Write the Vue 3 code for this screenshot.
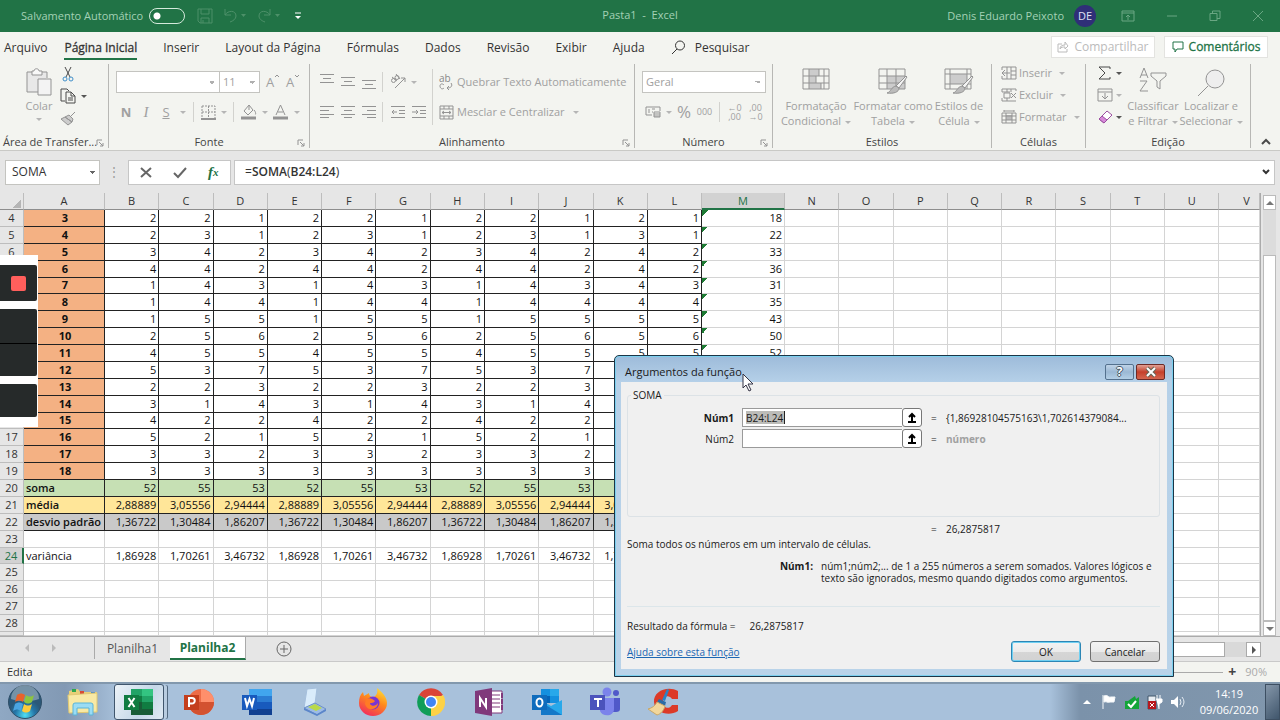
<script setup>
const menu = ['Arquivo', 'Página Inicial', 'Inserir', 'Layout da Página', 'Fórmulas', 'Dados', 'Revisão', 'Exibir', 'Ajuda']
const columns = 'ABCDEFGHIJKLMNOPQRSTUV'.split('')
const dataCols = 11
const scores = [
  [2, 2, 1], [2, 3, 1], [3, 4, 2], [4, 4, 2], [1, 4, 3], [1, 4, 4], [1, 5, 5], [2, 5, 6],
  [4, 5, 5], [5, 3, 7], [2, 2, 3], [3, 1, 4], [4, 2, 2], [5, 2, 1], [3, 3, 2], [3, 3, 3],
]
// Columns B–J repeat three values; K and L carry the last two of them.
const spread = (p) => Array.from({ length: dataCols }, (_, i) => (i < 9 ? p[i % 3] : p[i - 8]))
const rows = scores.map((p, i) => {
  const v = spread(p)
  return { n: i + 4, kind: 'score', label: i + 3, v, total: v.reduce((a, b) => a + b, 0) }
})
rows.push({ n: 20, kind: 'sum', label: 'soma', v: spread(['52', '55', '53']) })
rows.push({ n: 21, kind: 'mean', label: 'média', v: spread(['2,88889', '3,05556', '2,94444']) })
rows.push({ n: 22, kind: 'dev', label: 'desvio padrão', v: spread(['1,36722', '1,30484', '1,86207']) })
rows.push({ n: 23, kind: 'plain', label: '', v: spread(['', '', '']) })
rows.push({ n: 24, kind: 'plain', label: 'variância', v: spread(['1,86928', '1,70261', '3,46732']) })
for (let n = 25; n <= 28; n++) rows.push({ n, kind: 'plain', label: '', v: spread(['', '', '']) })
rows.push({ n: '', kind: 'plain', label: '', v: spread(['', '', '']) })
</script>

<template>
  <div class="screen">
    <header class="titlebar">
      <div class="start">
        <label class="autosave"><span>Salvamento Automático</span><input type="checkbox" class="toggle"></label>
        <div class="quick">
          <button aria-label="Salvar"><svg width="16" height="16" viewBox="0 0 16 16"><path d="M1 1h14v14H3l-2-2zM4 1v5h8V1M4 15v-5h8v5M6 15v-3" /></svg></button>
          <button aria-label="Desfazer"><svg width="24" height="16" viewBox="0 0 24 16"><path d="M2 1v6h6M2 7c3-5 11-5 11 1 0 3-3 5-6 6" /><path class="fill" d="M18 6h5l-2.500 3z" /></svg></button>
          <button aria-label="Refazer"><svg width="24" height="16" viewBox="0 0 24 16"><path d="M13 1v6H7M13 7C10 2 2 2 2 8c0 3 3 5 6 6" /><path class="fill" d="M18 6h5l-2.500 3z" /></svg></button>
          <button aria-label="Personalizar" class="bright"><svg width="8" height="8" viewBox="0 0 8 8"><path d="M1 1h6" /><path class="fill" d="M1 4h6L4 7z" /></svg></button>
        </div>
      </div>
      <div class="doc">Pasta1&nbsp; -&nbsp; Excel</div>
      <div class="end">
        <div class="account"><span>Denis Eduardo Peixoto</span><span class="avatar">DE</span></div>
        <div class="winbtns">
          <button aria-label="Opções da faixa"><svg width="14" height="12" viewBox="0 0 14 12"><path d="M1 1h12v10H1zM1 3h12M7 10V5M5 7l2-2 2 2" /></svg></button>
          <button aria-label="Minimizar"><svg width="12" height="12" viewBox="0 0 12 12"><path d="M1 6h10" /></svg></button>
          <button aria-label="Restaurar"><svg width="12" height="12" viewBox="0 0 12 12"><path d="M1 3.500h7v7H1zM3.500 3V1H11v7.500H8" /></svg></button>
          <button aria-label="Fechar"><svg width="12" height="12" viewBox="0 0 12 12"><path d="M1 1l10 10M11 1L1 11" /></svg></button>
        </div>
      </div>
    </header>

    <nav class="menubar">
      <button v-for="m in menu" :key="m" :class="{ current: m === 'Página Inicial' }">{{ m }}</button>
      <button class="search"><svg width="15" height="15" viewBox="0 0 15 15"><circle cx="9" cy="5.500" r="4.500" /><path d="M6 9l-5 5" /></svg>Pesquisar</button>
      <div class="right">
        <button class="share"><svg width="12" height="12" viewBox="0 0 12 12"><path d="M5 3H1v8h9V8M3 8c0-3 2-4 5-4V1l3 4-3 3V6C6 6 4 6 3 8z" /></svg>Compartilhar</button>
        <button class="comments"><svg width="12" height="12" viewBox="0 0 12 12"><path d="M1 1h10v7H5l-2 3V8H1z" /></svg>Comentários</button>
      </div>
    </nav>

    <section class="ribbon">
      <div class="group g-clip">
        <div class="content">
          <button class="big paste"><svg width="28" height="30" viewBox="0 0 28 30"><path d="M7 4H2v20h11M17 4h5v6" fill="#e8e8e8" /><path d="M3 5h18v6h-8v12H3z" fill="#e8e8e8" stroke="none" /><path d="M7 7V3h2c0-3 5-3 5 0h3v4z" fill="#f8f8f8" /><path d="M13 11h13v16H13z" fill="#f3f3f3" /></svg><span>Colar</span><i class="caret"></i></button>
          <div class="stack">
            <button aria-label="Recortar"><svg width="12" height="16" viewBox="0 0 12 16"><path class="dark" d="M3 1l5 10M9 1L4 11" /><circle class="blue" cx="3" cy="13" r="2" /><circle class="blue" cx="9" cy="13" r="2" /></svg></button>
            <button aria-label="Copiar"><svg width="16" height="16" viewBox="0 0 16 16"><path class="dark" d="M5 13H1V1h6l2 2M6 4h5l4 4v7H6zM11 4v4h4M8 10h5M8 12h5" /></svg><i class="caret strong"></i></button>
            <button aria-label="Pincel"><svg width="16" height="15" viewBox="0 0 16 15"><path d="M15 1l-4 4M5 6l4-2 4 4-1 3zM5 6l7 5-4 3-7-6z" fill="#ccc" /></svg></button>
          </div>
        </div>
        <div class="caption"><span>Área de Transfer...</span><svg class="launch" width="8" height="8" viewBox="0 0 8 8"><path d="M1 6V1h5M3 3l4 4M7 4v3H4" /></svg></div>
      </div>

      <div class="group g-font">
        <div class="content rows">
          <div class="line">
            <select class="box fontname" aria-label="Fonte"><option></option></select>
            <select class="box fontsize" aria-label="Tamanho"><option>11</option></select>
            <button class="w20 letter" aria-label="Aumentar fonte">A<svg class="mark" width="6" height="4" viewBox="0 0 6 4"><path d="M1 3l2-2 2 2" /></svg></button>
            <button class="w20 letter" aria-label="Diminuir fonte">A<svg class="mark" width="6" height="4" viewBox="0 0 6 4"><path d="M1 1l2 2 2-2" /></svg></button>
          </div>
          <div class="line">
            <button class="w20 letter"><b>N</b></button><button class="w20 letter serif"><i>I</i></button><button class="w20 letter"><u>S</u></button>
            <button class="w12" aria-label="Mais sublinhado"><i class="caret"></i></button><span class="vr tight"></span>
            <button class="w32" aria-label="Bordas"><svg width="15" height="15" viewBox="0 0 15 15"><path stroke-dasharray="2 1" d="M1 1h13v12M1 1v12M7.500 1v12M1 7h13" /><path d="M0 14h15" stroke-width="2" /></svg><i class="caret"></i></button><span class="vr tight"></span>
            <button class="w32" aria-label="Preenchimento"><svg width="16" height="16" viewBox="0 0 16 16"><path d="M8 1L3 7l4 4 5-5zM8 1v5M13 6c2 2 2 5 1 4" /><path d="M0 14h15" stroke-width="3" /></svg><i class="caret"></i></button>
            <button class="w32" aria-label="Cor da fonte"><svg width="16" height="16" viewBox="0 0 16 16"><path d="M3 11L7.500 1 12 11M5 8h5" /><path d="M0 14h15" stroke-width="3" /></svg><i class="caret"></i></button>
          </div>
        </div>
        <div class="caption"><span>Fonte</span><svg class="launch" width="8" height="8" viewBox="0 0 8 8"><path d="M1 6V1h5M3 3l4 4M7 4v3H4" /></svg></div>
      </div>

      <div class="group g-align">
        <div class="content cols">
          <div class="rows">
            <div class="line">
              <button class="w21" aria-label="Alinhar acima"><svg width="14" height="16" viewBox="0 0 14 16"><path d="M0 .500h14M3 4.500h8M0 8.500h14" /></svg></button>
              <button class="w21" aria-label="Alinhar ao meio"><svg width="14" height="16" viewBox="0 0 14 16"><path d="M0 3.500h14M3 7.500h8M0 11.500h14" /></svg></button>
              <button class="w21" aria-label="Alinhar abaixo"><svg width="14" height="16" viewBox="0 0 14 16"><path d="M0 6.500h14M3 10.500h8M0 14.500h14" /></svg></button>
              <span class="vr tight"></span>
              <button class="w32" aria-label="Orientação"><svg width="16" height="16" viewBox="0 0 16 16"><path d="M5 14L15 4M11 4h4v4" /><circle cx="3.500" cy="6.500" r="2" /><path d="M2 3l5 4" /><circle cx="7" cy="3.500" r="2" /><path d="M6 0l4 5" /></svg><i class="caret"></i></button>
            </div>
            <div class="line">
              <button class="w21" aria-label="Alinhar à esquerda"><svg width="14" height="14" viewBox="0 0 14 14"><path d="M0 1.500h14M0 5.500h9M0 9.500h14M0 12.500h9" /></svg></button>
              <button class="w21" aria-label="Centralizar"><svg width="14" height="14" viewBox="0 0 14 14"><path d="M0 1.500h14M3 5.500h8M0 9.500h14M3 12.500h8" /></svg></button>
              <button class="w21" aria-label="Alinhar à direita"><svg width="14" height="14" viewBox="0 0 14 14"><path d="M0 1.500h14M5 5.500h9M0 9.500h14M5 12.500h9" /></svg></button>
              <span class="vr tight"></span>
              <button class="w21" aria-label="Diminuir recuo"><svg width="14" height="14" viewBox="0 0 14 14"><path d="M0 1.500h14M8 5.500h6M8 8.500h6M0 12.500h14M6 7H1M3 5L1 7l2 2" /></svg></button>
              <button class="w21" aria-label="Aumentar recuo"><svg width="14" height="14" viewBox="0 0 14 14"><path d="M0 1.500h14M8 5.500h6M8 8.500h6M0 12.500h14M0 7h6M4 5l2 2-2 2" /></svg></button>
            </div>
          </div>
          <span class="vr tall"></span>
          <div class="rows">
            <div class="line"><button class="text"><span class="abc"><span>ab</span><svg width="14" height="8" viewBox="0 0 14 8"><path d="M5 2C3 0 1 1 1 3s2 4 4 2M12 0c2 3 0 5-4 5M10 3L8 5l2 2" /></svg></span>Quebrar Texto Automaticamente</button></div>
            <div class="line"><button class="text"><svg width="15" height="15" viewBox="0 0 15 15"><path d="M1 1h13v13H1zM1 4h13M1 11h13M5 1v3M10 1v3M5 11v3M10 11v3M3 7.500h9M5 6L3 7.500 5 9M10 6l2 1.500L10 9" /></svg>Mesclar e Centralizar<i class="caret"></i></button></div>
          </div>
        </div>
        <div class="caption"><span>Alinhamento</span><svg class="launch" width="8" height="8" viewBox="0 0 8 8"><path d="M1 6V1h5M3 3l4 4M7 4v3H4" /></svg></div>
      </div>

      <div class="group g-num">
        <div class="content rows">
          <div class="line"><select class="box format" aria-label="Formato"><option>Geral</option></select></div>
          <div class="line">
            <button class="w32" aria-label="Moeda"><svg width="16" height="14" viewBox="0 0 16 14"><path d="M1 2h14v4M1 2v8h6M4 4v4M7 4h3M7 7h1M9 7h6v5H9zM9 9h6M9 11h6" /></svg><i class="caret"></i></button>
            <button class="percent">%</button><button class="thousand">000</button><span class="vr"></span>
            <button class="w21 dec" aria-label="Aumentar casas">←0<br>,00</button><button class="w21 dec" aria-label="Diminuir casas">,00<br>→0</button>
          </div>
        </div>
        <div class="caption"><span>Número</span><svg class="launch" width="8" height="8" viewBox="0 0 8 8"><path d="M1 6V1h5M3 3l4 4M7 4v3H4" /></svg></div>
      </div>

      <div class="group g-style">
        <div class="content">
          <button class="big b1"><svg width="28" height="26" viewBox="0 0 28 26"><path fill="#ccc" stroke="none" d="M7 1h10v7H7zM7 8h7v7H7zM7 15h12v6H7z" /><path d="M1 1h26v20H1zM1 8h26M1 15h26M7 1v20M22 1v20M17 1v7M14 8v7M19 15v6" /></svg><span>Formatação<br>Condicional<i class="caret"></i></span></button>
          <button class="big b2"><svg width="30" height="26" viewBox="0 0 30 26"><path fill="#ccc" stroke="none" d="M9 8h18v13H9z" /><path d="M1 1h26v20H1zM1 8h26M1 15h26M9 1v20M18 1v20" /><path fill="#f3f3f3" d="M28 8L18 18l3 2 8-11z" /><path fill="#bbb" d="M18 18l3 2c0 4-5 6-12 5 4-1 4-6 9-7z" /></svg><span>Formatar como<br>Tabela<i class="caret"></i></span></button>
          <button class="big b3"><svg width="30" height="26" viewBox="0 0 30 26"><path fill="#ccc" stroke="none" d="M6 6h17v10H6z" /><path d="M1 1h26v20H1zM1 6h26M1 16h26M6 1v20M23 1v20" /><path fill="#f3f3f3" d="M28 8L18 18l3 2 8-11z" /><path fill="#bbb" d="M18 18l3 2c0 4-5 6-12 5 4-1 4-6 9-7z" /></svg><span>Estilos de<br>Célula<i class="caret"></i></span></button>
        </div>
        <div class="caption"><span>Estilos</span></div>
      </div>

      <div class="group g-cell">
        <div class="content stack3">
          <button><svg width="16" height="14" viewBox="0 0 16 14"><path d="M1 4V1h14v12H1v-3M6 1v12M10 1v12M10 5h5M10 9h5M9 7H1M4 4L1 7l3 3" /></svg>Inserir<i class="caret"></i></button>
          <button><svg width="16" height="14" viewBox="0 0 16 14"><path d="M1 1h14v2M1 1v3h8M1 13h14M1 10v3M6 1v3M10 1v3M6 10v3M3 5h6v5H3zM10 5l5 5M15 5l-5 5" /></svg>Excluir<i class="caret"></i></button>
          <button><svg width="16" height="14" viewBox="0 0 16 14"><path fill="#bbb" stroke="none" d="M5 5h6v5H5z" /><path d="M1 3h14v10H1zM5 3v10M11 3v10M1 6h14M1 10h14M3 1h10M3 0v2M13 0v2" /></svg>Formatar<i class="caret"></i></button>
        </div>
        <div class="caption"><span>Células</span></div>
      </div>

      <div class="group g-edit">
        <div class="content">
          <div class="stack3 narrow">
            <button aria-label="Soma"><svg width="16" height="14" viewBox="0 0 16 14"><path class="dark" d="M13 3V1H2l6 6-6 6h11v-2" /></svg><i class="caret strong"></i></button>
            <button aria-label="Preencher"><svg width="16" height="14" viewBox="0 0 16 14"><path d="M1 1h14v12H1zM1 4h14M8 5v6M5 8l3 3 3-3" /></svg><i class="caret"></i></button>
            <button aria-label="Limpar"><svg width="16" height="14" viewBox="0 0 16 14"><path class="purple" fill="#fff" d="M10 1l5 4-8 8-5-4z" /><path class="purple" fill="#d78ad9" d="M5 6l5 4-3 3-5-4z" /></svg><i class="caret strong"></i></button>
          </div>
          <button class="big b4"><svg width="28" height="26" viewBox="0 0 28 26"><path d="M1 10L5 0l4 10M2 7h6M1 13h7L1 23h8M12 5h15v3l-6 5v8l-3-2v-6l-6-5z" /></svg><span>Classificar<br>e Filtrar<i class="caret"></i></span></button>
          <button class="big b5"><svg width="28" height="28" viewBox="0 0 28 28"><circle cx="18" cy="10" r="9" fill="#eee" /><path d="M11 17L1 27" /></svg><span>Localizar e<br>Selecionar<i class="caret"></i></span></button>
        </div>
        <div class="caption"><span>Edição</span></div>
      </div>
      <button class="collapse" aria-label="Recolher"><svg width="10" height="8" viewBox="0 0 10 8"><path class="dark" d="M1 6l4-4 4 4" stroke-width="2" /></svg></button>
    </section>

    <section class="formula">
      <select class="namebox" aria-label="Caixa de nome"><option>SOMA</option></select>
      <span class="dots">⋮</span>
      <div class="fxbtns">
        <button aria-label="Cancelar edição"><svg width="12" height="12" viewBox="0 0 12 12"><path d="M1 2l10 9M11 2L1 11" stroke-width="2" /></svg></button>
        <button aria-label="Inserir valor"><svg width="14" height="12" viewBox="0 0 14 12"><path d="M1 7l4 4 8-9" stroke-width="2" /></svg></button>
        <button class="fx" aria-label="Inserir função">f<small>x</small></button>
      </div>
      <div class="fbar"><span>=<b>SOMA</b>(<b>B24:L24</b>)</span><svg width="10" height="8" viewBox="0 0 10 8"><path d="M2 2l3 3 3-3" stroke-width="2" /></svg></div>
    </section>

    <main class="sheet">
      <table>
        <thead><tr>
          <th class="corner"></th>
          <th v-for="c in columns" :key="c" :class="{ active: c === 'M', last: c === 'V' }">{{ c }}</th>
        </tr></thead>
        <tbody>
          <tr v-for="(r, i) in rows" :key="i" :class="r.kind">
            <th :class="{ on: r.n === 24 }">{{ r.n }}</th>
            <td class="lab">{{ r.label }}</td>
            <td v-for="(x, j) in r.v" :key="j" class="num">{{ x }}</td>
            <td class="tot" :class="{ flag: r.total }">{{ r.total }}</td>
            <td v-for="k in 9" :key="'e' + k"></td>
          </tr>
        </tbody>
      </table>
      <div class="vscroll"><span class="btn"><i class="up"></i></span><span class="track"></span><span class="thumb"></span><span class="btn"><i class="down"></i></span></div>
    </main>

    <section class="tabs">
      <span class="arrows"><i class="left"></i><i class="rightarrow"></i></span>
      <button class="tab">Planilha1</button><button class="tab sel">Planilha2</button>
      <button class="plus" aria-label="Nova planilha"><svg width="16" height="16" viewBox="0 0 16 16"><circle cx="8" cy="8" r="7" /><path d="M8 4v8M4 8h8" /></svg></button>
      <div class="hscroll"><span class="hthumb"></span><span class="htrack"></span><span class="hbtn"><i class="rightarrow"></i></span></div>
    </section>
    <footer class="status"><span>Edita</span><span class="zoom"><i class="rail"></i><b>+</b><span>90%</span></span></footer>

    <footer class="taskbar">
      <button class="task" aria-label="Iniciar"><svg width="36" height="36" viewBox="0 0 36 36"><defs><radialGradient id="orb" cy=".9"><stop offset="0" stop-color="#4fe0f5" /><stop offset=".6" stop-color="#2476a8" /><stop offset="1" stop-color="#2b5878" /></radialGradient></defs><circle cx="18" cy="18" r="16.500" fill="url(#orb)" stroke="#2f4f68" /><path d="M4 15a14 14 0 0 1 28 0c-8 3-20 3-28 0z" fill="#fff" opacity=".35" /><path d="M10 11c3-2 5-2 8 0l-2 7c-3-2-5-2-8 0z" fill="#e9622a" /><path d="M19 11c3 2 5 2 8 0l-2 7c-3 2-5 2-8 0z" fill="#8cc540" /><path d="M8 20c3-2 5-2 8 0l-2 7c-3-2-5-2-8 0z" fill="#4aa5e2" /><path d="M17 20c3 2 5 2 8 0l-2 7c-3 2-5 2-8 0z" fill="#fccb3d" /></svg></button>
      <button class="task" aria-label="Explorador"><svg width="32" height="30" viewBox="0 0 32 30"><path d="M2 4l9-2 2 3h17v20H2z" fill="#e8cf78" /><path d="M5 2h4v3H5z" fill="#2fa84f" /><path d="M13 4h4v3h-4z" fill="#d74a35" /><path d="M24 5h4v3h-4z" fill="#4a8ad0" /><path d="M1 8l29-2v19l-28 1z" fill="#f8e9a5" stroke="#e0c873" /><path d="M6 28V18q0-2 2-2h16q2 0 2 2v10h-4v-7H10v7z" fill="#9bdcf4" stroke="#5ab4d8" /></svg></button>
      <button class="task open" aria-label="Excel"><svg width="30" height="28" viewBox="0 0 30 28"><path d="M7 1h22v26H7z" fill="#21a366" /><path d="M18 1h11v7H18z" fill="#33c481" /><path d="M7 8h11v6H7z" fill="#107c41" /><path d="M7 14h11v13H7z" fill="#185c37" /><path d="M18 14h11v7H18z" fill="#107c41" /><path d="M18 21h11v6H18z" fill="#185c37" /><path d="M0 7h15v15H0z" fill="#107c41" /><path d="M4.500 10l6 9M10.500 10l-6 9" stroke="#fff" stroke-width="2" /></svg></button>
      <button class="task" aria-label="PowerPoint"><svg width="30" height="28" viewBox="0 0 30 28"><circle cx="17" cy="14" r="13" fill="#ed6c47" /><path d="M17 1a13 13 0 0 1 13 13H17z" fill="#ff8f6b" /><path d="M4 14h26a13 13 0 0 1-26 0z" fill="#d35230" /><path d="M0 7h15v15H0z" fill="#c43e1c" /><path d="M5 19v-9h3a2.500 2.500 0 0 1 0 5.500H5" fill="none" stroke="#fff" stroke-width="2" /></svg></button>
      <button class="task" aria-label="Word"><svg width="30" height="28" viewBox="0 0 30 28"><path d="M7 1h23v26H7z" fill="#2b7cd3" /><path d="M7 1h23v7H7z" fill="#41a5ee" /><path d="M7 14h23v7H7z" fill="#185abd" /><path d="M7 21h23v6H7z" fill="#103f91" /><path d="M0 7h15v15H0z" fill="#185abd" /><path d="M3 10l2 8 2.500-7L10 18l2-8" fill="none" stroke="#fff" stroke-width="2" /></svg></button>
      <button class="task" aria-label="Scanner"><svg width="28" height="30" viewBox="0 0 28 30"><path d="M6 2l10-1-2 16-11 4z" fill="#d9ecfb" stroke="#a5bfdc" /><path d="M3 21l11-5 11 6-9 6z" fill="#9dbbe6" stroke="#6f92c8" /><path d="M7 20l7-3 7 4-6 3z" fill="#b9d94a" /><path d="M3 21v2l13 6 9-5v-2l-9 5z" fill="#5b86ca" /></svg></button>
      <button class="task" aria-label="Firefox"><svg width="30" height="30" viewBox="0 0 30 30"><defs><linearGradient id="fire" x1=".8" y1="0" x2=".3" y2="1"><stop offset="0" stop-color="#ffe13a" /><stop offset=".45" stop-color="#ff8a1c" /><stop offset="1" stop-color="#f22c5d" /></linearGradient></defs><path d="M19 1c5 4 10 9 10 15a14 13 0 0 1-28 0c0-5 1-8 4-11l1 4 5-3c0 3 2 4 5 4 3-2 4-5 3-9z" fill="url(#fire)" /><circle cx="15" cy="16" r="6.500" fill="#7a35d2" /><path d="M8 12c4-2 7 0 9 2-2 3-5 1-5 3 2 3 6 2 8-1 0 7-11 9-13 1z" fill="#ff7b25" /></svg></button>
      <button class="task" aria-label="Chrome"><svg width="28" height="28" viewBox="0 0 28 28"><path d="M14 14L2 7a14 14 0 0 1 24 0z" fill="#db4437" /><path d="M14 14l12-7a14 14 0 0 1-12 21z" fill="#fdd247" /><path d="M14 14v14A14 14 0 0 1 2 7z" fill="#0f9d58" /><path d="M14 8h12.700a14 14 0 0 1-11.700 20l5-10z" fill="#fdd247" /><circle cx="14" cy="14" r="6.500" fill="#fff" /><circle cx="14" cy="14" r="5" fill="#4285f4" /></svg></button>
      <button class="task" aria-label="OneNote"><svg width="30" height="30" viewBox="0 0 30 30"><path d="M15 4h13v22H15z" fill="#fff" stroke="#80397b" /><path d="M18 8h8M18 12h8M18 16h8M18 20h8" stroke="#80397b" /><path d="M28 6v5M28 12v5M28 18v5" stroke="#80397b" stroke-width="2" /><path d="M1 4l17-3v28L1 26z" fill="#80397b" /><path d="M6 20v-9l6 9v-9" fill="none" stroke="#fff" stroke-width="2" /></svg></button>
      <button class="task" aria-label="Outlook"><svg width="30" height="28" viewBox="0 0 30 28"><path d="M9 1h18v14H9z" fill="#1490df" /><path d="M18 1h9v7h-9z" fill="#28a8ea" /><path d="M9 8h9v7H9z" fill="#0364b8" /><path d="M9 12l10 6 11-6v15H9z" fill="#28a8ea" /><path d="M9 14l21 13H9z" fill="#1478c8" /><path d="M0 7h15v15H0z" fill="#0f6cbd" /><ellipse cx="7.500" cy="14.500" rx="3" ry="4" fill="none" stroke="#fff" stroke-width="2" /></svg></button>
      <button class="task" aria-label="Teams"><svg width="30" height="30" viewBox="0 0 30 30"><circle cx="17" cy="5" r="4.500" fill="#7b83eb" /><circle cx="26" cy="6" r="3" fill="#5059c9" /><path d="M21 11h9v11q0 3-4 3h-5z" fill="#5059c9" /><path d="M10 11h14v11c0 8-12 8-14 2z" fill="#7b83eb" /><path d="M0 8h15v15H0z" fill="#4b53bc" /><path d="M4 12h8M8 12v8" stroke="#fff" stroke-width="2" /></svg></button>
      <button class="task" aria-label="CCleaner"><svg width="32" height="30" viewBox="0 0 32 30"><path d="M31 4v8h-6c-3-5-9-3-9 3s6 8 9 3h6v6c-9 6-23 2-24-9S21-2 31 4z" fill="#dc3a28" /><path d="M20 2l2 1-4 11-3-1z" fill="#2b83c6" /><path d="M12 12l7 3-1 4-8-4z" fill="#2b6ba5" /><path d="M10 15l8 4c-1 4-4 8-8 9L1 22c4-1 7-3 9-7z" fill="#f2d79c" stroke="#c9a768" /></svg></button>
      <div class="tray">
        <i class="up"></i>
        <svg width="16" height="18" viewBox="0 0 16 18"><path d="M2 2v14M3 3c4-2 4 2 7 1h4l-1 5H9c-3 1-3-1-6 0z" fill="#fff" stroke="#f5f8fa" /></svg>
        <svg width="16" height="16" viewBox="0 0 16 16"><path d="M1 7h3l7-5 1 3 3-2v12H1z" fill="#14a53a" /><path d="M4 10l3 3 5-6" fill="none" stroke="#fff" stroke-width="2" /></svg>
        <svg width="16" height="16" viewBox="0 0 16 16"><path d="M1 2h8v13H1z" fill="#e8edf2" stroke="#40566b" /><path d="M1 7h8v8H1z" fill="#b8181e" /><path d="M3 9l4 4M7 9l-4 4" stroke="#fff" /><path d="M10 1v4M13 1v4M9 5h6v3l-3 2v5" fill="#fff" stroke="#fff" stroke-width="1" /></svg>
        <svg width="16" height="16" viewBox="0 0 16 16"><path d="M1 6h3l4-4v12l-4-4H1z" fill="#fff" /><path d="M10 5q2 3 0 6M12 3q4 5 0 10" fill="none" stroke="#e5ecf3" /></svg>
      </div>
      <div class="clock">14:19<br>09/06/2020</div>
      <span class="desk"></span>
    </footer>

    <div class="recorder"><span class="rec"><i></i></span><span class="double"></span><span class="one"></span></div>

    <div class="dialog" role="dialog" aria-label="Argumentos da função">
      <div class="dtitle"><span>Argumentos da função</span>
        <button aria-label="Ajuda da janela">?</button><button class="x" aria-label="Fechar janela"><svg width="12" height="10" viewBox="0 0 12 10"><path d="M2 1l8 8M10 1L2 9" stroke="#665" stroke-width="4" /><path d="M2 1l8 8M10 1L2 9" stroke="#fff" stroke-width="2" /></svg></button>
      </div>
      <div class="dbody">
        <fieldset>
          <legend>SOMA</legend>
          <div class="arg"><label for="n1"><b>Núm1</b></label><span class="field"><span class="marked"><input id="n1" value="B24:L24"></span><button aria-label="Selecionar Núm1"><svg width="10" height="10" viewBox="0 0 10 10"><path d="M5 8V2M2 4l3-3 3 3M1 9h8" /></svg></button></span><span>=</span><span>{1,86928104575163\1,702614379084...</span></div>
          <div class="arg"><label for="n2">Núm2</label><span class="field"><span class="marked"><input id="n2" class="empty"></span><button aria-label="Selecionar Núm2"><svg width="10" height="10" viewBox="0 0 10 10"><path d="M5 8V2M2 4l3-3 3 3M1 9h8" /></svg></button></span><span>=</span><b class="gray">número</b></div>
        </fieldset>
        <div class="arg result"><span></span><span></span><span>=</span><span>26,2875817</span></div>
        <p class="desc">Soma todos os números em um intervalo de células.</p>
        <div class="help"><b>Núm1:</b><span>núm1;núm2;... de 1 a 255 números a serem somados. Valores lógicos e<br>texto são ignorados, mesmo quando digitados como argumentos.</span></div>
        <div class="final"><span>Resultado da fórmula =</span><span>26,2875817</span></div>
        <div class="foot"><a href="#">Ajuda sobre esta função</a><button class="ok">OK</button><button>Cancelar</button></div>
      </div>
    </div>
    <svg class="pointer" width="13" height="19" viewBox="0 0 13 19"><path d="M1 1v14l3-3 3 6 2-1-3-6h5z" fill="#fff" stroke="#334" /></svg>
  </div>
</template>

<style>
body { margin: 0; }
</style>

<style scoped>
.screen { position: relative; display: flex; flex-direction: column; height: 100vh; min-height: 560px; overflow: hidden; background: #e6e6e6; color: #333; font: 11px/14px "Open Sans", "Noto Sans", sans-serif; }
.screen * { box-sizing: border-box; }
button, input, select { font: inherit; color: inherit; }
button { padding: 0; border: 0; background: none; }
svg { flex: none; display: block; overflow: visible; }
select { appearance: none; }

.titlebar { display: grid; grid-template-columns: 1fr auto 1fr; align-items: center; height: 32px; flex: none; background: #217346; color: #a3d1b5; }
.titlebar svg, .menubar svg, .ribbon svg, .formula svg, .plus svg { fill: none; stroke: currentColor; }
.titlebar .fill { fill: currentColor; stroke: none; }
.start, .end { display: flex; align-items: center; }
.end { justify-content: flex-end; }
.autosave { display: flex; align-items: center; gap: 6px; width: 194px; padding-left: 21px; white-space: nowrap; }
.toggle { appearance: none; flex: none; width: 36px; height: 16px; margin: 0; border: 1px solid #d5eadc; border-radius: 8px; background: radial-gradient(circle at 7px 7px, #fff 3px, transparent 4px); }
.quick { display: flex; align-items: center; gap: 10px; padding-left: 3px; color: #4d9069; }
.quick .bright { color: #fff; margin-left: 3px; }
.doc { padding-bottom: 2px; }
.account { display: flex; align-items: center; gap: 10px; padding-right: 25px; }
.avatar { width: 22px; height: 22px; border-radius: 50%; background: #2f2f78; color: #dfe0f5; text-align: center; line-height: 22px; }
.winbtns { display: flex; gap: 31px; padding-right: 16px; color: #6aa783; }

.menubar { display: flex; align-items: center; gap: 26px; height: 30px; flex: none; padding-left: 4px; background: #f3f4f0; font-size: 12px; white-space: nowrap; }
.menubar > button { height: 25px; padding-top: 3px; border-bottom: 2px solid transparent; }
.menubar > button:first-child { margin-right: -9px; }
.menubar .current { border-color: #217346; -webkit-text-stroke: .3px; }
.search { display: flex; align-items: center; gap: 9px; }
.right { display: flex; gap: 9px; margin-left: auto; padding-right: 12px; }
.right button { display: flex; align-items: center; justify-content: center; gap: 5px; width: 104px; height: 22px; background: #fff; border: 1px solid #e3e3e0; }
.right .share { color: #bbb; }
.right .comments { color: #217346; -webkit-text-stroke: .3px; }

.ribbon { display: flex; height: 89px; flex: none; background: #f3f4f0; border-bottom: 1px solid #c9c9c6; color: #a0a0a0; font-size: 11px; }
.ribbon svg { stroke: #939393; }
.group { position: relative; flex: none; display: flex; flex-direction: column; height: 84px; margin-top: 2px; border-right: 1px solid #b7b7b4; }
.g-clip { width: 109px; }
.g-font { width: 201px; }
.g-align { width: 325px; }
.g-num { width: 138px; }
.g-style { width: 219px; }
.g-cell { width: 94px; }
.g-edit { width: 165px; }
.content { display: flex; height: 70px; white-space: nowrap; }
.rows { display: flex; flex-direction: column; padding-top: 3px; }
.line { display: flex; align-items: center; height: 30px; }
.line button { display: flex; align-items: center; justify-content: center; height: 24px; }
.caption { position: relative; display: flex; justify-content: center; height: 14px; line-height: 15px; color: #444; white-space: nowrap; }
.g-clip .caption { justify-content: flex-start; padding-left: 3px; }
.launch { position: absolute; right: 4px; top: 5px; }
.caret { display: inline-block; flex: none; width: 0; height: 0; border: 3px solid transparent; border-top-color: #b5b5b5; border-bottom: 0; margin-left: 5px; vertical-align: middle; }
.caret.strong { border-top-color: #555; }
.dark { stroke: #4a4a4a; }
.blue { stroke: #3f8fca; }
.purple { stroke: #9b4ea0; }
.big { display: flex; flex-direction: column; align-items: center; line-height: 15px; padding-top: 4px; }
.big > svg { height: 30px; }
.g-style .big > svg, .b4 > svg { height: 26px; margin-bottom: 4px; }
.big .caret { margin-left: 4px; }
.paste { width: 54px; margin-left: 12px; }
.paste .caret { margin: 5px 0 0; }
.stack { width: 34px; display: flex; flex-direction: column; gap: 6px; padding-top: 2px; margin-left: -6px; }
.stack button { display: flex; align-items: center; justify-content: flex-start; height: 16px; }
.stack button:first-child { padding-left: 2px; }
.g-font .rows { padding-left: 7px; }
.box, .namebox {
  --arrow: #b0b0b0;
  border: 1px solid #c4c4c0;
  border-radius: 0;
  padding: 0 3px;
  background:
    linear-gradient(to bottom right, var(--arrow) 50%, transparent 50%) no-repeat right 4px center / 3px 3px,
    linear-gradient(to bottom left, var(--arrow) 50%, transparent 50%) no-repeat right 7px center / 3px 3px,
    #fff;
}
.box { height: 22px; }
.fontname { width: 104px; }
.fontsize { width: 41px; margin: 0 3px 0 -1px; }
.format { width: 124px; }
.w12 { width: 14px; }
.w12 .caret { margin: 0; }
.w20 { width: 20px; }
.w21 { width: 21px; }
.w32 { width: 32px; }
.letter { font-size: 13px; }
.letter .mark { align-self: flex-start; margin-top: 4px; }
.serif { font-family: "Liberation Serif", serif; font-size: 15px; }
.vr { width: 1px; height: 20px; margin: 0 4px; background: #d2d2ce; flex: none; }
.vr.tight { margin: 0 4px 0 3px; }
.vr.tall { height: 56px; margin: 5px 6px 0 0; }
.g-align .cols > .rows:first-child { width: 122px; padding-left: 6px; }
.text { gap: 3px; }
.abc { display: flex; flex-direction: column; width: 15px; font-size: 10px; line-height: 9px; color: #888; text-align: left; }
.g-num .rows { padding-left: 7px; }
.percent { font-size: 17px; width: 20px; }
.thousand { font-size: 9px; width: 21px; }
.dec { font-size: 9px; line-height: 9px; }
.b1 { width: 76px; margin-left: 5px; }
.b2 { width: 78px; }
.b3 { width: 54px; }
.stack3 { display: flex; flex-direction: column; }
.g-cell .stack3 { padding-left: 9px; }
.stack3 button { display: flex; align-items: center; gap: 2px; height: 22px; padding-bottom: 4px; }
.narrow { width: 38px; padding-left: 11px; }
.narrow .caret { margin-left: 1px; }
.b4 { width: 58px; }
.b5 { width: 58px; }
.collapse { align-self: flex-end; margin-left: auto; padding: 0 9px 4px; }

.formula { display: flex; align-items: center; flex: none; height: 42px; padding: 0 5px; background: #e6e6e6; font-size: 12px; }
.formula > * { height: 25px; }
.namebox { --arrow: #666; width: 95px; padding: 0 6px; }
.dots { width: 28px; text-align: center; line-height: 24px; color: #999; }
.fxbtns { display: flex; align-items: center; width: 103px; border: 1px solid #c6c6c6; background: #fff; }
.fxbtns button { flex: 1; display: flex; justify-content: center; align-items: center; color: #666; }
.fxbtns .fx { color: #217346; font: italic bold 15px/20px "Liberation Serif", serif; }
.fx small { font-size: 11px; }
.fbar { flex: 1; display: flex; align-items: center; justify-content: space-between; margin-left: 3px; padding: 0 3px 0 10px; border: 1px solid #c6c6c6; background: #fff; }
.fbar b { font-weight: 600; }

.sheet { flex: 1; display: flex; min-height: 0; }
table { flex: 1; display: grid; grid-template-columns: 24px 81px repeat(11, 4fr) 83px repeat(8, 4fr) 3fr; grid-template-rows: 17px repeat(25, 17fr) 4px; background: #fff; border-right: 1px solid #ababab; overflow: hidden; }
thead, tbody, tr { display: contents; }
th, td { display: flex; align-items: center; min-width: 0; min-height: 0; padding: 0; overflow: hidden; white-space: nowrap; border-right: 1px solid #d4d4d4; border-bottom: 1px solid #d4d4d4; line-height: 14px; }
th { justify-content: center; background: #e6e6e6; font-weight: 400; border-color: #bdbdbd; }
thead th { border-bottom-color: #8e8e8e; }
.corner { background: linear-gradient(135deg, transparent 50%, #b5b5b5 50%) no-repeat 12px 6px / 9px 9px, #e6e6e6; }
thead .active { background: #d2d2d2; color: #217346; border-bottom: 2px solid #217346; }
thead .last { padding-left: 15px; }
.on { background: #d2d2d2; color: #217346; border-right: 2px solid #217346; }
td { color: #111; }
.num, .tot { justify-content: flex-end; padding-right: 2px; }
.lab { padding-left: 2px; }
.score .lab { justify-content: center; background: #f4b183; font-weight: 700; }
.score .lab, .score .num, .sum .lab, .sum .num, .mean .lab, .mean .num, .dev .lab, .dev .num { border-color: #222; }
.sum .lab, .mean .lab, .dev .lab { font-weight: 600; }
.sum .lab, .sum .num { background: #c6e0b4; }
.mean .lab, .mean .num { background: #ffe699; }
.dev .lab, .dev .num { background: #c9c9c9; }
.flag { background: linear-gradient(135deg, #1e7b34 50%, transparent 50%) no-repeat 0 0 / 6px 6px; }
.vscroll { width: 19px; flex: none; display: flex; flex-direction: column; padding: 2px 4px 0 2px; background: #e6e6e6; }
.vscroll span { border: 1px solid #bbb; background: #fff; }
.vscroll .btn { height: 15px; display: flex; align-items: center; justify-content: center; }
.vscroll .track { flex: none; height: 45px; background: #dcdcdc; border: 0; }
.vscroll .thumb { flex: 1; }
.up, .down, .left, .rightarrow { width: 0; height: 0; border: 4px solid transparent; }
.up { border-bottom-color: #777; border-top: 0; }
.down { border-top-color: #777; border-bottom: 0; }
.left { border-right-color: #bbb; border-left: 0; }
.rightarrow { border-left-color: #bbb; border-right: 0; }

.tabs { display: flex; align-items: flex-start; flex: none; height: 26px; border-top: 1px solid #ababab; border-bottom: 1px solid #c9c9c9; font-size: 12px; }
.arrows { display: flex; align-items: center; justify-content: space-between; width: 95px; height: 22px; padding: 0 38px 0 25px; border-right: 1px solid #aaa; }
.tab { width: 75px; height: 23px; color: #555; }
.tab.sel { width: 76px; background: #fff; color: #217346; font-weight: 700; border-bottom: 2px solid #217346; border-right: 1px solid #aaa; }
.plus { margin: 4px 0 0 30px; color: #666; }
.hscroll { display: flex; width: 560px; height: 15px; margin: 5px 19px 0 auto; }
.hthumb { flex: 1; background: #fff; border: 1px solid #aaa; }
.htrack { width: 21px; background: #d9d9d9; }
.hbtn { width: 15px; display: flex; align-items: center; justify-content: center; background: #fff; border: 1px solid #aaa; }
.hbtn i { border-left-color: #555; }
.status { display: flex; justify-content: space-between; align-items: center; flex: none; height: 20px; padding: 0 13px 0 7px; background: #f3f4f0; }
.zoom { display: flex; align-items: center; gap: 5px; color: #aaa; }
.zoom b { color: #444; font-size: 14px; margin-right: 4px; }
.rail { width: 100px; height: 1px; background: #aaa; }

.taskbar { display: flex; align-items: center; flex: none; height: 38px; border-top: 2px solid #8298ad; background: linear-gradient(90deg, #8fa8c3, #8299b4 65px, #a8c1db 120px, #a8c1db 1050px, #7b92aa 1080px, #8197ad); }
.task { width: 58px; height: 36px; display: flex; align-items: center; justify-content: center; flex: none; }
.task:first-child { width: 54px; padding-right: 4px; }
.task.open { width: 50px; margin: 0 6px 0 2px; border: 1px solid #40566d; border-radius: 3px; background: linear-gradient(120deg, #edf3f8, #c5d7e8 60%, #e0eaf3); box-shadow: 4px 0 0 -1px #b8cce0, 5px 0 0 -1px #526980; }
.tray { display: flex; align-items: center; gap: 7px; margin-left: auto; }
.tray .up { border-bottom-color: #fff; margin-right: 3px; }
.clock { width: 66px; margin-left: 10px; text-align: center; line-height: 16px; color: #fff; }
.desk { width: 15px; height: 36px; margin-left: 3px; border: 1px solid #3d4f62; background: linear-gradient(135deg, #8496a9, #40566c); }

.recorder { position: absolute; left: 0; top: 255px; width: 38px; display: flex; flex-direction: column; gap: 8px; padding: 10px 0; background: #fff; }
.recorder span { width: 37px; background: #262a2a; border-radius: 0 2px 2px 0; }
.recorder .rec { height: 36px; display: flex; align-items: center; padding-left: 11px; }
.rec i { width: 15px; height: 15px; border-radius: 2px; background: #ff5f5c; }
.recorder .double { height: 67px; background: linear-gradient(#262a2a 34px, #000 34px, #000 35px, #262a2a 35px); }
.recorder .one { height: 33px; }

.dialog { position: absolute; left: 614px; top: 355px; width: 560px; border: 1px solid #1c3547; border-radius: 5px 5px 0 0; padding: 0 6px 7px; background: linear-gradient(#9dbbda, #b5d0e8 26px, #b9d3e9); box-shadow: inset 0 0 0 1px #7bd0ef; color: #1a1a1a; font-size: 10px; }
.dtitle { display: flex; height: 26px; padding: 0 2px 0 4px; align-items: center; gap: 2px; font-size: 11px; }
.dtitle span { flex: 1; padding-top: 6px; }
.dtitle button { display: flex; align-items: center; justify-content: center; width: 29px; height: 16px; margin-top: 6px; border: 1px solid #54718e; border-radius: 2px; background: linear-gradient(#bfd3e8, #9bb8d4 50%, #b3cfe6); color: #fff; font-size: 12px; font-weight: 700; text-shadow: 1px 0 #456, -1px 0 #456, 0 1px #456, 0 -1px #456; }
.dtitle .x { border-color: #6d2a26; background: linear-gradient(#e0a095, #c5402b 50%, #d4664f); }
.dbody { height: 287px; padding: 6px 7px 0 6px; display: flex; flex-direction: column; background: #f0f0f0; }
fieldset { margin: 0; height: 129px; border: 1px solid #dce2e6; border-radius: 3px; padding: 5px 0 0; min-width: 0; flex: none; }
legend { margin-left: 3px; padding: 0 2px; }
.arg { display: grid; grid-template-columns: 106px 179px 6px 1fr; column-gap: 9px; align-items: center; height: 21px; white-space: nowrap; }
.arg label { text-align: right; }
.field { display: flex; margin-left: -1px; }
.marked { flex: 1; display: flex; align-items: center; height: 19px; padding-left: 3px; border: 1px solid #9a9a9a; border-right: 0; background: #fff; min-width: 0; }
.marked input { width: 39px; height: 13px; padding: 0; border: 0; border-right: 1px solid #222; background: #bcbcb8; outline: 0; }
.marked .empty { width: 100%; background: none; border: 0; }
.field button { width: 20px; height: 19px; display: flex; align-items: center; justify-content: center; border: 1px solid #777; border-radius: 3px; background: #fff; }
.field svg { fill: none; stroke: #000; stroke-width: 2; }
.gray { color: #a0a0a0; }
.result { flex: none; margin-top: 2px; height: 20px; padding-left: 1px; }
.desc { margin: -2px 0 0; line-height: 14px; }
.help { display: flex; gap: 8px; margin-top: 9px; height: 47px; line-height: 12px; border-bottom: 1px solid #dce6ea; white-space: nowrap; }
.help b { width: 186px; text-align: right; }
.final { display: flex; gap: 14px; margin-top: 12px; }
.foot { display: flex; align-items: center; gap: 9px; margin-top: 8px; }
.foot a { margin-right: auto; color: #1b67b3; text-decoration: underline; }
.foot button { width: 70px; height: 21px; border: 1px solid #707070; border-radius: 3px; background: linear-gradient(#f3f3f3, #ebebeb 50%, #d6d6d6 50%, #d2d2d2); }
.foot .ok { border-color: #2c86b5; box-shadow: inset 0 0 0 1px #6fd0f2; }
.pointer { position: absolute; left: 742px; top: 373px; }
</style>
